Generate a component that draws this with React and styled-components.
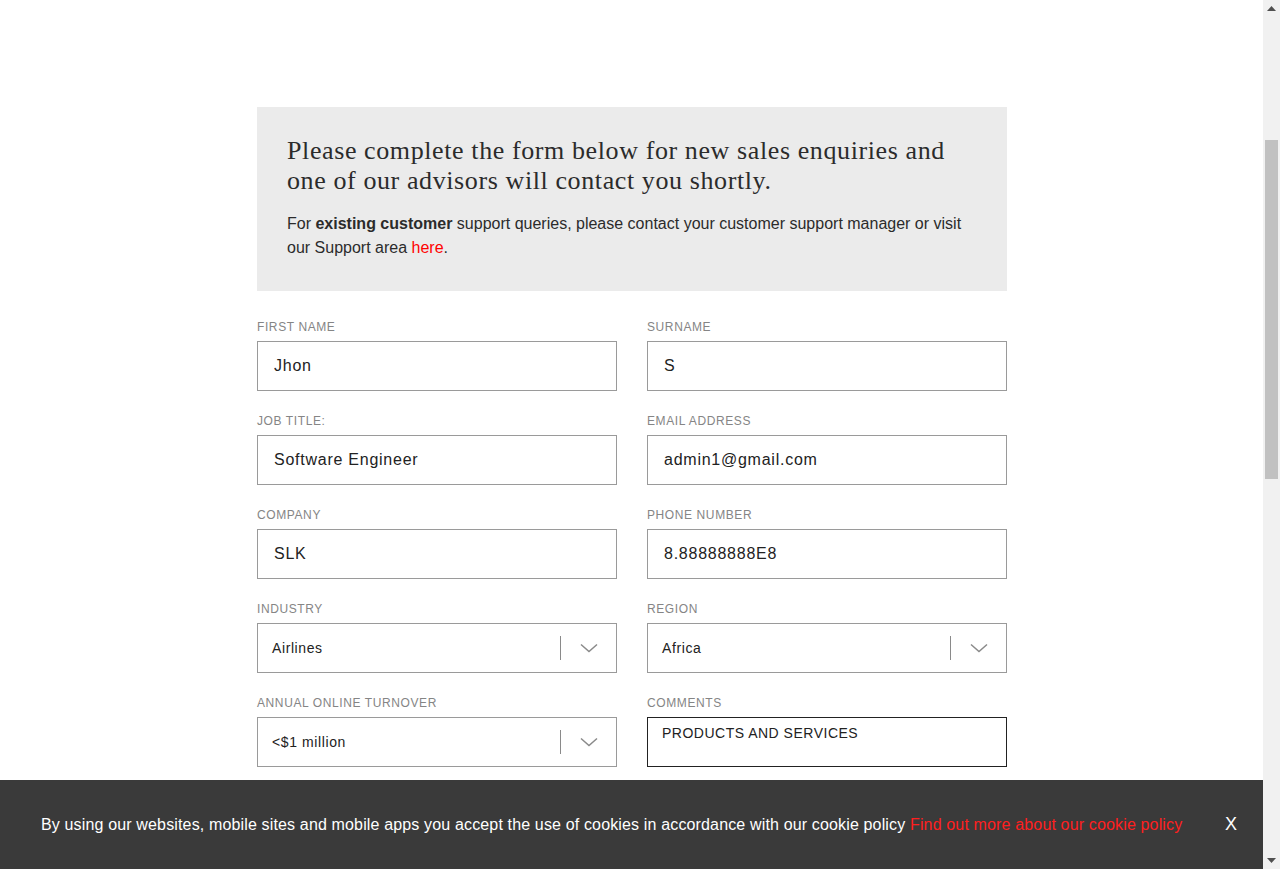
import React from 'react';
import styled, { createGlobalStyle } from 'styled-components';

const GlobalStyle = createGlobalStyle`
  html, body {
    margin: 0;
    padding: 0;
    background: #fff;
    overflow: hidden;
  }
  body {
    font-family: "Liberation Sans", Arial, sans-serif;
    color: #222;
  }
`;

const fields = [
  { label: 'FIRST NAME', value: 'Jhon' },
  { label: 'SURNAME', value: 'S' },
  { label: 'JOB TITLE:', value: 'Software Engineer' },
  { label: 'EMAIL ADDRESS', value: 'admin1@gmail.com' },
  { label: 'COMPANY', value: 'SLK' },
  { label: 'PHONE NUMBER', value: '8.88888888E8' },
  { label: 'INDUSTRY', value: 'Airlines', select: true },
  { label: 'REGION', value: 'Africa', select: true },
  { label: 'ANNUAL ONLINE TURNOVER', value: '<$1 million', select: true },
  { label: 'COMMENTS', value: 'PRODUCTS AND SERVICES', textarea: true },
];

const Chevron = () => (
  <svg width="18" height="10" viewBox="0 0 18 10" fill="none">
    <path d="M1 1.5 L9 8.5 L17 1.5" stroke="#8a8a8a" strokeWidth="1.5" />
  </svg>
);

const Triangle = ({ down }) => (
  <svg width="9" height="5" viewBox="0 0 9 5">
    <path d={down ? 'M0 0 L9 0 L4.5 5 Z' : 'M0 5 L9 5 L4.5 0 Z'} fill="#505050" />
  </svg>
);

const App = () => (
  <>
    <GlobalStyle />
    <Page>
      <Form>
        <Intro>
          <Heading>
            Please complete the form below for new sales enquiries and one of our
            advisors will contact you shortly.
          </Heading>
          <IntroText>
            For <strong>existing customer</strong> support queries, please contact your
            customer support manager or visit our Support area <a href="#">here</a>.
          </IntroText>
        </Intro>

        <Grid>
          {fields.map((f) => (
            <Field key={f.label}>
              <Label>{f.label}</Label>
              {f.select ? (
                <SelectBox>
                  <SelectValue>{f.value}</SelectValue>
                  <Arrow>
                    <Chevron />
                  </Arrow>
                </SelectBox>
              ) : f.textarea ? (
                <TextArea defaultValue={f.value} />
              ) : (
                <Input defaultValue={f.value} />
              )}
            </Field>
          ))}
        </Grid>
      </Form>
    </Page>

    <CookieBar>
      <CookieText>
        By using our websites, mobile sites and mobile apps you accept the use of cookies
        in accordance with our cookie policy <a href="#">Find out more about our cookie policy</a>
      </CookieText>
      <Close>X</Close>
    </CookieBar>

    <ScrollBar>
      <ScrollButton>
        <Triangle />
      </ScrollButton>
      <Track>
        <Thumb />
      </Track>
      <ScrollButton>
        <Triangle down />
      </ScrollButton>
    </ScrollBar>
  </>
);

const Page = styled.div`
  margin-right: 16px;
  padding: 107px 0 120px;
`;

const Form = styled.div`
  width: 750px;
  margin: 0 auto;
`;

const Intro = styled.div`
  background: #ebebeb;
  padding: 29px 30px 31px;
`;

const Heading = styled.h2`
  max-width: 690px;
  margin: 0 0 16px;
  font-family: "Liberation Serif", "Times New Roman", serif;
  font-weight: 400;
  font-size: 26px;
  line-height: 30px;
  letter-spacing: 0.6px;
  color: #2b2b2b;
`;

const IntroText = styled.p`
  margin: 0;
  font-size: 16px;
  line-height: 24px;
  color: #2b2b2b;

  strong {
    font-weight: 700;
  }

  a {
    color: #ff0000;
    text-decoration: none;
  }
`;

const Grid = styled.div`
  display: grid;
  grid-template-columns: 1fr 1fr;
  column-gap: 30px;
  row-gap: 23px;
  margin-top: 29px;
`;

const Field = styled.div`
  display: flex;
  flex-direction: column;
`;

const Label = styled.label`
  font-size: 12px;
  line-height: 14px;
  letter-spacing: 0.6px;
  color: #858585;
  margin-bottom: 7px;
`;

const Input = styled.input`
  box-sizing: border-box;
  height: 50px;
  width: 100%;
  border: 1px solid #9a9a9a;
  padding: 0 16px;
  font-family: "Liberation Sans", Arial, sans-serif;
  font-size: 16px;
  letter-spacing: 0.75px;
  color: #222;
  outline: none;
  background: #fff;
`;

const TextArea = styled.textarea`
  box-sizing: border-box;
  height: 50px;
  width: 100%;
  border: 1px solid #222;
  padding: 7px 14px;
  font-family: "Liberation Sans", Arial, sans-serif;
  font-size: 14px;
  line-height: 16px;
  letter-spacing: 0.5px;
  color: #222;
  resize: none;
  outline: none;
`;

const SelectBox = styled.div`
  box-sizing: border-box;
  height: 50px;
  display: flex;
  align-items: center;
  border: 1px solid #9a9a9a;
  padding-left: 14px;
  background: #fff;
`;

const SelectValue = styled.span`
  flex: 1;
  font-size: 14px;
  letter-spacing: 0.6px;
  color: #222;
`;

const Arrow = styled.span`
  width: 55px;
  height: 24px;
  display: flex;
  align-items: center;
  justify-content: center;
  border-left: 1px solid #8a8a8a;
`;

const CookieBar = styled.div`
  position: fixed;
  left: 0;
  right: 17px;
  bottom: 0;
  height: 89px;
  background: #3a3a3a;
  display: flex;
  align-items: center;
  padding: 0 26px 0 41px;
`;

const CookieText = styled.p`
  flex: 1;
  margin: 0;
  font-size: 16px;
  letter-spacing: 0.15px;
  color: #fff;

  a {
    color: #ff1f1f;
    text-decoration: none;
  }
`;

const Close = styled.button`
  background: none;
  border: none;
  color: #fff;
  font-family: "Liberation Sans", Arial, sans-serif;
  font-size: 18px;
  padding: 0;
  cursor: pointer;
`;

const ScrollBar = styled.div`
  position: fixed;
  top: 0;
  right: 0;
  bottom: 0;
  width: 17px;
  background: #f1f1f1;
  display: flex;
  flex-direction: column;
`;

const ScrollButton = styled.div`
  height: 17px;
  display: flex;
  align-items: center;
  justify-content: center;
`;

const Track = styled.div`
  flex: 1;
  padding: 123px 2px 0;
`;

const Thumb = styled.div`
  height: 339px;
  background: #c1c1c1;
`;

export default App;
